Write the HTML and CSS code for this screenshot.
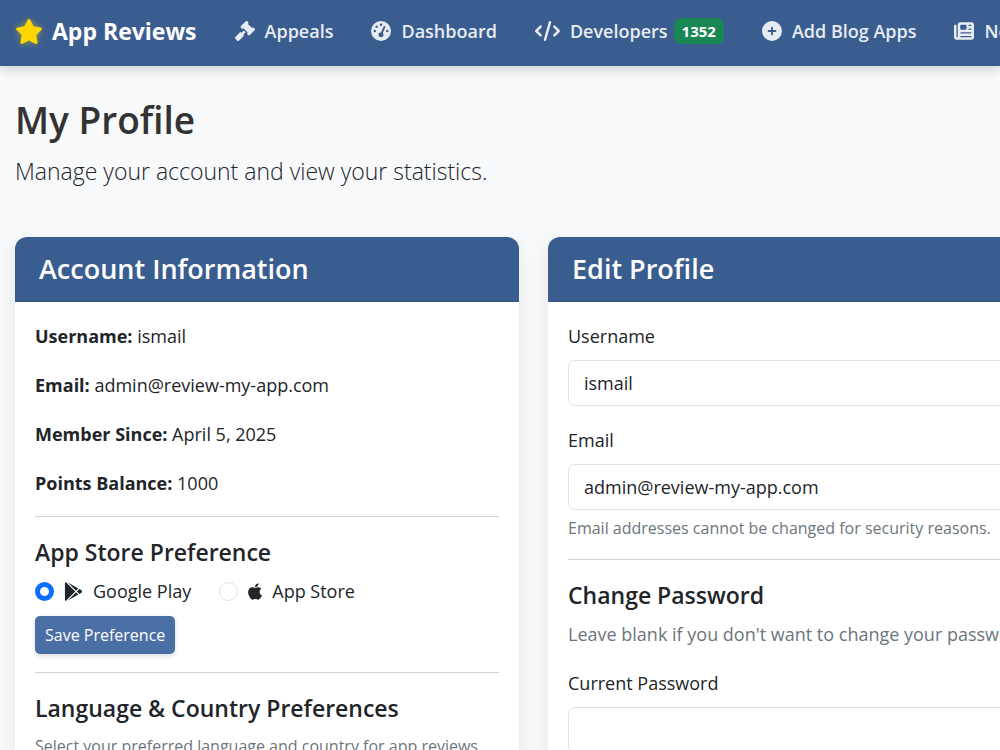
FILE: index.html
```
<!DOCTYPE html>
<html lang="en">
<head>
    <meta charset="UTF-8">
    <meta name="viewport" content="width=device-width, initial-scale=1.0">
    <title>My Profile - App Reviews</title>
    <link rel="stylesheet" href="styles.css">
</head>
<body>
    <nav class="navbar">
        <a class="brand" href="#">
            <svg class="star" viewBox="0 0 576 512"><path d="M316.9 18C311.6 7 300.4 0 288.1 0s-23.4 7-28.8 18L195 150.3 51.4 171.5c-12 1.8-22 10.2-25.7 21.7s-.7 24.2 7.9 32.7L137.8 329 113.2 474.7c-2 12 3 24.2 12.9 31.3s23 8 33.8 2.3l128.3-68.5 128.3 68.5c10.8 5.7 23.9 4.9 33.8-2.3s14.9-19.3 12.9-31.3L438.5 329 542.7 225.9c8.6-8.5 11.7-21.2 7.9-32.7s-13.7-19.9-25.7-21.7L381.2 150.3 316.9 18z"/></svg>
            App Reviews
        </a>
        <ul class="nav-list">
            <li>
                <a class="nav-link" href="#">
                    <svg class="nav-icon" viewBox="0 0 512 512"><path d="M318.6 9.4c-12.5-12.5-32.8-12.5-45.3 0l-120 120c-12.5 12.5-12.5 32.8 0 45.3l16 16c12.5 12.5 32.8 12.5 45.3 0l4-4L325.4 293.4l-4 4c-12.5 12.5-12.5 32.8 0 45.3l16 16c12.5 12.5 32.8 12.5 45.3 0l120-120c12.5-12.5 12.5-32.8 0-45.3l-16-16c-12.5-12.5-32.8-12.5-45.3 0l-4 4L330.6 74.6l4-4c12.5-12.5 12.5-32.8 0-45.3l-16-16zm-152 288c-12.5-12.5-32.8-12.5-45.3 0l-112 112c-12.5 12.5-12.5 32.8 0 45.3l48 48c12.5 12.5 32.8 12.5 45.3 0l112-112c12.5-12.5 12.5-32.8 0-45.3l-1.4-1.4L272 285.3 226.7 240 168 298.7l-1.4-1.4z"/></svg>
                    Appeals
                </a>
            </li>
            <li>
                <a class="nav-link" href="#">
                    <svg class="nav-icon" viewBox="0 0 512 512"><path d="M0 256a256 256 0 1 1 512 0A256 256 0 1 1 0 256zM288 96a32 32 0 1 0 -64 0 32 32 0 1 0 64 0zM256 416c35.3 0 64-28.7 64-64c0-17.4-6.9-33.1-18.1-44.6L366 161.7c5.3-12.1-.2-26.3-12.3-31.6s-26.3 .2-31.6 12.3L257.9 288c-.6 0-1.3 0-1.9 0c-35.3 0-64 28.7-64 64s28.7 64 64 64zM176 144a32 32 0 1 0 -64 0 32 32 0 1 0 64 0zM96 288a32 32 0 1 0 0-64 32 32 0 1 0 0 64zm352-32a32 32 0 1 0 -64 0 32 32 0 1 0 64 0z"/></svg>
                    Dashboard
                </a>
            </li>
            <li>
                <a class="nav-link" href="#">
                    <svg class="nav-icon wide" viewBox="0 0 640 512"><path d="M392.8 1.2c-17-4.9-34.7 5-39.6 22l-128 448c-4.9 17 5 34.7 22 39.6s34.7-5 39.6-22l128-448c4.9-17-5-34.7-22-39.6zm80.6 120.1c-12.5 12.5-12.5 32.8 0 45.3L562.7 256l-89.4 89.4c-12.5 12.5-12.5 32.8 0 45.3s32.8 12.5 45.3 0l112-112c12.5-12.5 12.5-32.8 0-45.3l-112-112c-12.5-12.5-32.8-12.5-45.3 0zm-306.7 0c-12.5-12.5-32.8-12.5-45.3 0l-112 112c-12.5 12.5-12.5 32.8 0 45.3l112 112c12.5 12.5 32.8 12.5 45.3 0s12.5-32.8 0-45.3L77.3 256l89.4-89.4c12.5-12.5 12.5-32.8 0-45.3z"/></svg>
                    Developers
                    <span class="badge">1352</span>
                </a>
            </li>
            <li>
                <a class="nav-link" href="#">
                    <svg class="nav-icon" viewBox="0 0 512 512"><path d="M256 512A256 256 0 1 0 256 0a256 256 0 1 0 0 512zM232 344V280H168c-13.3 0-24-10.7-24-24s10.7-24 24-24h64V168c0-13.3 10.7-24 24-24s24 10.7 24 24v64h64c13.3 0 24 10.7 24 24s-10.7 24-24 24H280v64c0 13.3-10.7 24-24 24s-24-10.7-24-24z"/></svg>
                    Add Blog Apps
                </a>
            </li>
            <li>
                <a class="nav-link" href="#">
                    <svg class="nav-icon" viewBox="0 0 512 512"><path d="M96 96c0-35.3 28.7-64 64-64H448c35.3 0 64 28.7 64 64V416c0 35.3-28.7 64-64 64H80c-44.2 0-80-35.8-80-80V128c0-17.7 14.3-32 32-32s32 14.3 32 32V400c0 8.8 7.2 16 16 16s16-7.2 16-16V96zm64 24v80c0 13.3 10.7 24 24 24H296c13.3 0 24-10.7 24-24V120c0-13.3-10.7-24-24-24H184c-13.3 0-24 10.7-24 24zm208-8c0 8.8 7.2 16 16 16h48c8.8 0 16-7.2 16-16s-7.2-16-16-16H384c-8.8 0-16 7.2-16 16zm0 96c0 8.8 7.2 16 16 16h48c8.8 0 16-7.2 16-16s-7.2-16-16-16H384c-8.8 0-16 7.2-16 16zM160 304c0 8.8 7.2 16 16 16H432c8.8 0 16-7.2 16-16s-7.2-16-16-16H176c-8.8 0-16 7.2-16 16zm0 96c0 8.8 7.2 16 16 16H432c8.8 0 16-7.2 16-16s-7.2-16-16-16H176c-8.8 0-16 7.2-16 16z"/></svg>
                    News
                </a>
            </li>
        </ul>
    </nav>

    <main class="container">
        <h1>My Profile</h1>
        <p class="lead">Manage your account and view your statistics.</p>

        <div class="row">
            <section class="card">
                <h2 class="card-header">Account Information</h2>
                <div class="card-body">
                    <div class="info">
                        <p><strong>Username:</strong> ismail</p>
                        <p><strong>Email:</strong> admin@review-my-app.com</p>
                        <p><strong>Member Since:</strong> April 5, 2025</p>
                        <p><strong>Points Balance:</strong> 1000</p>
                    </div>
                    <hr>
                    <form>
                        <h3>App Store Preference</h3>
                        <div class="store-options">
                            <label class="radio" for="google-play">
                                <input type="radio" id="google-play" name="store" checked>
                                <svg class="play-icon" viewBox="0 0 512 512"><path d="M325.3 234.3L104.6 13l280.8 161.2-60.1 60.1zM47 0C34 6.8 25.3 19.2 25.3 35.3v441.3c0 16.1 8.7 28.5 21.7 35.3l256.6-256L47 0zm425.2 225.6l-58.9-34.1-65.7 64.5 65.7 64.5 60.1-34.1c18-14.3 18-46.5-1.2-60.8zM104.6 499l280.8-161.2-60.1-60.1L104.6 499z"/></svg>
                                Google Play
                            </label>
                            <label class="radio" for="app-store">
                                <input type="radio" id="app-store" name="store">
                                <svg class="apple-icon" viewBox="0 0 384 512"><path d="M318.7 268.7c-.2-36.7 16.4-64.4 50-84.8-18.8-26.9-47.2-41.7-84.7-44.6-35.5-2.8-74.3 20.7-88.5 20.7-15 0-49.4-19.7-76.4-19.7C63.3 141.2 4 184.8 4 273.5q0 39.3 14.4 81.2c12.8 36.7 59 126.7 107.2 125.2 25.2-.6 43-17.9 75.8-17.9 31.8 0 48.3 17.9 76.4 17.9 48.6-.7 90.4-82.5 102.6-119.3-65.2-30.7-61.7-90-61.7-91.9zm-56.6-164.2c27.3-32.4 24.8-61.9 24-72.5-24.1 1.4-52 16.4-67.9 34.9-17.5 19.8-27.8 44.3-25.6 71.9 26.1 2 49.9-11.4 69.5-34.3z"/></svg>
                                App Store
                            </label>
                        </div>
                        <button type="submit" class="btn">Save Preference</button>
                    </form>
                    <hr>
                    <h3>Language &amp; Country Preferences</h3>
                    <p class="small-text">Select your preferred language and country for app reviews.</p>
                </div>
            </section>

            <section class="card">
                <h2 class="card-header">Edit Profile</h2>
                <form class="card-body">
                    <div class="field">
                        <label for="username">Username</label>
                        <input type="text" id="username" class="form-control" value="ismail">
                    </div>
                    <div class="field">
                        <label for="email">Email</label>
                        <input type="email" id="email" class="form-control" value="admin@review-my-app.com" readonly>
                        <p class="small-text">Email addresses cannot be changed for security reasons.</p>
                    </div>
                    <hr>
                    <h3>Change Password</h3>
                    <p class="hint">Leave blank if you don't want to change your password.</p>
                    <div class="field">
                        <label for="current-password">Current Password</label>
                        <input type="password" id="current-password" class="form-control">
                    </div>
                </form>
            </section>
        </div>
    </main>
</body>
</html>
```
FILE: styles.css
```
* {
    margin: 0;
    padding: 0;
    box-sizing: border-box;
}

html {
    overflow: hidden;
}

body {
    background-color: #f8f9fb;
    font-family: 'Segoe UI', 'Open Sans', 'Noto Sans', sans-serif;
    font-size: 18px;
    line-height: 29px;
    color: #212529;
}

svg {
    fill: currentColor;
    flex-shrink: 0;
}

.navbar {
    display: flex;
    align-items: center;
    height: 66px;
    padding: 0 15px 4px;
    background: #3a5d8f;
    box-shadow: 0 2px 14px rgba(0, 0, 0, 0.2);
    white-space: nowrap;
}

.brand {
    display: flex;
    align-items: center;
    gap: 9px;
    margin-right: 38px;
    font-size: 23px;
    font-weight: 700;
    color: #fff;
    text-decoration: none;
}

.star {
    width: 28px;
    height: 25px;
    fill: #ffd700;
    filter: drop-shadow(0 0 3px rgba(255, 215, 0, 0.5));
}

.nav-list {
    display: flex;
    gap: 38px;
    list-style: none;
}

.nav-link {
    display: flex;
    align-items: center;
    gap: 10px;
    font-weight: 600;
    color: #e7ecf3;
    text-decoration: none;
}

.nav-icon {
    width: 20px;
    height: 20px;
}

.nav-icon.wide {
    width: 25px;
}

.badge {
    margin-left: -4px;
    padding: 0 8px;
    border-radius: 7px;
    background: #198754;
    color: #fff;
    font-size: 15px;
    font-weight: 700;
    line-height: 26px;
}

.container {
    padding: 30px 15px;
}

h1 {
    font-size: 37px;
    font-weight: 600;
    line-height: 48px;
    color: #333;
}

.lead {
    margin: 10px 0 48px;
    font-size: 23px;
    font-weight: 300;
    line-height: 35px;
}

.row {
    display: grid;
    grid-template-columns: minmax(504px, 1fr) minmax(1037px, 2fr);
    gap: 29px;
    align-items: start;
}

.card {
    border-radius: 12px;
    background: #fff;
    box-shadow: 0 5px 18px rgba(0, 0, 0, 0.08);
    overflow: hidden;
}

.card-header {
    padding: 14px 24px;
    border-bottom: 1px solid #34537f;
    background: #3a5d8f;
    color: #fff;
    font-size: 27px;
    font-weight: 600;
    line-height: 36px;
}

.card-body {
    padding: 20px;
}

.info {
    display: grid;
    gap: 20px;
}

hr {
    margin: 18px 0 19px;
    border: 0;
    border-top: 1px solid #d3d4d5;
}

h3 {
    margin-bottom: 9px;
    font-size: 23px;
    font-weight: 600;
    line-height: 32px;
}

.store-options {
    display: flex;
    gap: 28px;
    margin-bottom: 10px;
}

.radio {
    display: flex;
    align-items: center;
    gap: 10px;
}

.radio input {
    appearance: none;
    width: 19px;
    height: 19px;
    border: 1px solid #dee2e6;
    border-radius: 50%;
    background: #fff;
}

.radio input:checked {
    border: 5px solid #0d6efd;
}

.play-icon {
    width: 19px;
    height: 19px;
}

.apple-icon {
    width: 14px;
    height: 19px;
}

.btn {
    display: block;
    height: 38px;
    padding: 0 10px;
    border: 0;
    border-radius: 5px;
    background: #4a6fa5;
    box-shadow: 0 2px 5px rgba(0, 0, 0, 0.15);
    color: #fff;
    font-family: inherit;
    font-size: 16px;
    cursor: pointer;
}

.btn:hover {
    background: #3a5d8f;
}

.field {
    margin-bottom: 20px;
}

.field:has(+ hr) {
    margin-bottom: 0;
}

.field label {
    display: block;
    margin-bottom: 9px;
}

.form-control {
    display: block;
    width: 100%;
    height: 46px;
    padding: 0 15px;
    border: 1px solid #dee2e6;
    border-radius: 7px;
    background: #fff;
    color: #212529;
    font-family: inherit;
    font-size: 18px;
}

.form-control:focus {
    outline: none;
    border-color: #4a6fa5;
}

.small-text {
    margin-top: 5px;
    color: #6c757d;
    font-size: 16px;
    line-height: 26px;
}

.hint {
    margin-bottom: 20px;
    color: #6c757d;
}
```
